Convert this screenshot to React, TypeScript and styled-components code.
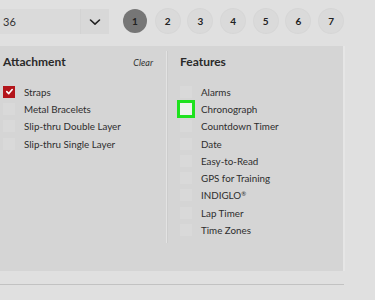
import styled, { createGlobalStyle } from "styled-components";

const Global = createGlobalStyle`
  html, body {
    margin: 0;
    padding: 0;
    background: #e0e0e0;
    font-family: Lato, "Open Sans", sans-serif;
    color: #2a2a2a;
  }
`;

const Page = styled.div`
  width: 375px;
  height: 300px;
  overflow: hidden;
  background: #e0e0e0;
`;

const TopBar = styled.div`
  display: flex;
  align-items: center;
  height: 46px;
  padding-bottom: 4px;
  box-sizing: border-box;
`;

const Select = styled.div`
  display: flex;
  align-items: stretch;
  width: 109px;
  height: 25px;
  margin-top: 1px;
  background: #dadada;
  border-radius: 0 2px 2px 0;
`;

const SelectValue = styled.div`
  flex: 1;
  display: flex;
  align-items: center;
  padding-left: 3px;
  font-size: 11px;
  color: #333;
`;

const SelectArrow = styled.div`
  width: 28px;
  display: flex;
  align-items: center;
  justify-content: center;
  border-left: 1px solid #d3d3d3;
  background: #d8d8d8;
  svg {
    width: 14px;
    height: 14px;
  }
`;

const Pager = styled.div`
  display: flex;
  gap: 8.7px;
  margin-left: 14px;
`;

const PageDot = styled.div<{ $active?: boolean }>`
  width: 24px;
  height: 24px;
  border-radius: 50%;
  display: flex;
  align-items: center;
  justify-content: center;
  font-size: 10px;
  font-weight: 700;
  color: #222;
  background: ${p => (p.$active ? "#767676" : "#dadada")};
  box-shadow: ${p => (p.$active ? "none" : "0 0 0 1px #d6d6d6")};
`;

const Panel = styled.div`
  width: 345px;
  height: 225px;
  background: #d5d5d5;
  display: flex;
  padding-top: 4px;
  box-sizing: border-box;
  border-right: 2px solid #e6e6e6;
`;

const Column = styled.div<{ $right?: boolean }>`
  box-sizing: border-box;
  width: ${p => (p.$right ? "auto" : "166px")};
  flex: ${p => (p.$right ? "1" : "none")};
  padding: ${p => (p.$right ? "0 0 0 13px" : "0 13px 0 3px")};
`;

const Divider = styled.div`
  width: 1px;
  height: 192px;
  margin-top: 1px;
  background: #e3e3e3;
  box-shadow: 1px 0 0 #cdcdcd;
`;

const Head = styled.div`
  display: flex;
  align-items: baseline;
  justify-content: space-between;
  height: 25px;
  padding-top: 4px;
  box-sizing: border-box;
`;

const Title = styled.div`
  font-size: 12px;
  font-weight: 700;
  color: #2a2a2a;
`;

const Clear = styled.div`
  font-size: 9px;
  font-style: italic;
  color: #333;
`;

const List = styled.div`
  display: flex;
  flex-direction: column;
  margin-top: 8px;
`;

const Option = styled.label`
  display: flex;
  align-items: center;
  height: 17.3px;
  gap: 9px;
  font-size: 9.8px;
  color: #2e2e2e;
  sup {
    font-size: 6px;
    vertical-align: 3px;
    line-height: 0;
  }
`;

const Box = styled.span<{ $checked?: boolean; $focus?: boolean }>`
  width: 12px;
  height: 12px;
  flex: none;
  display: flex;
  align-items: center;
  justify-content: center;
  background: ${p => (p.$checked ? "#b3151b" : p.$focus ? "#eef3ee" : "#d9d9d9")};
  box-shadow: ${p => (p.$focus ? "0 0 0 3px #1ee21e" : "none")};
  svg {
    width: 9px;
    height: 9px;
  }
`;

const BottomLine = styled.div`
  width: 344px;
  height: 1px;
  margin-top: 13px;
  background: #c2c2c2;
`;

type Item = { name: string; mark?: string; checked?: boolean; focus?: boolean };

const attachments: Item[] = [
  { name: "Straps", checked: true },
  { name: "Metal Bracelets" },
  { name: "Slip-thru Double Layer" },
  { name: "Slip-thru Single Layer" },
];

const features: Item[] = [
  { name: "Alarms" },
  { name: "Chronograph", focus: true },
  { name: "Countdown Timer" },
  { name: "Date" },
  { name: "Easy-to-Read" },
  { name: "GPS for Training" },
  { name: "INDIGLO", mark: "®" },
  { name: "Lap Timer" },
  { name: "Time Zones" },
];

const Check = () => (
  <svg viewBox="0 0 10 10" fill="none" stroke="#fff" strokeWidth="1.8" strokeLinecap="round" strokeLinejoin="round">
    <path d="M2 5.2 L4.2 7.3 L8 2.8" />
  </svg>
);

const Options = ({ items }: { items: Item[] }) => (
  <List>
    {items.map(it => (
      <Option key={it.name}>
        <Box $checked={it.checked} $focus={it.focus}>
          {it.checked ? <Check /> : null}
        </Box>
        <span>
          {it.name}
          {it.mark ? <sup>{it.mark}</sup> : null}
        </span>
      </Option>
    ))}
  </List>
);

const App = () => {
  return (
    <Page>
      <Global />
      <TopBar>
        <Select>
          <SelectValue>36</SelectValue>
          <SelectArrow>
            <svg viewBox="0 0 14 14" fill="none" stroke="#222" strokeWidth="1.6" strokeLinecap="round" strokeLinejoin="round">
              <path d="M2.5 5 L7 9.2 L11.5 5" />
            </svg>
          </SelectArrow>
        </Select>
        <Pager>
          {[1, 2, 3, 4, 5, 6, 7].map(n => (
            <PageDot key={n} $active={n === 1}>
              {n}
            </PageDot>
          ))}
        </Pager>
      </TopBar>
      <Panel>
        <Column>
          <Head>
            <Title>Attachment</Title>
            <Clear>Clear</Clear>
          </Head>
          <Options items={attachments} />
        </Column>
        <Divider />
        <Column $right>
          <Head>
            <Title>Features</Title>
          </Head>
          <Options items={features} />
        </Column>
      </Panel>
      <BottomLine />
    </Page>
  );
};

export default App;
